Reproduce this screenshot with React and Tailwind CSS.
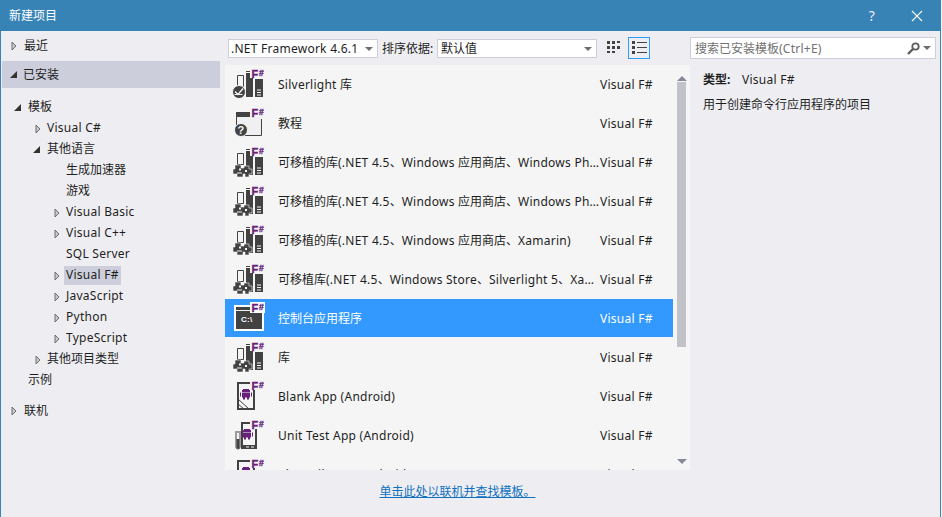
import React from "react";

const FONT = '"Noto Sans","Noto Sans CJK SC",sans-serif';

function T({ children }) {
  const parts = String(children).split(/([\u3000-\u9fff\uff00-\uffef]+)/);
  return (
    <>
      {parts.map((p, i) =>
        i % 2 === 1 ? (
          <span key={i} className="tracking-normal">{p}</span>
        ) : (
          <React.Fragment key={i}>{p}</React.Fragment>
        )
      )}
    </>
  );
}

function FSharp({ x = 19.5, y = 9.5 }) {
  return (
    <text x={x} y={y} fontFamily='"Liberation Sans",sans-serif' fontWeight="700" fill="#68217A" stroke="#68217A" strokeWidth="0.35">
      <tspan fontSize="11">F</tspan>
      <tspan fontSize="8.5" dx="0.5" dy="-1.5">#</tspan>
    </text>
  );
}

function Books() {
  return (
    <>
      <path d="M5.5 7.5h6v11h-6z" fill="#F5F5F5" stroke="#424242" />
      <path d="M14 5h7v24h-7z" fill="#424242" />
      <path d="M14 3.5h4" stroke="#424242" />
      <path d="M23 11h8v18h-8z" fill="#424242" />
      <path d="M25 22h4M25 24.5h4M25 27h4" stroke="#F5F5F5" />
      <rect x="18" y="0" width="15" height="10" fill="#F5F5F5" />
    </>
  );
}

function SilverlightIcon() {
  return (
    <svg width="34" height="33" viewBox="0 0 34 33" className="shrink-0">
      <Books />
      <circle cx="7" cy="24" r="6.5" fill="#424242" stroke="#F5F5F5" />
      <path d="M3 23.5l3 3 5-6" fill="none" stroke="#F5F5F5" strokeWidth="1.4" />
      <path d="M2.5 26.5h8" stroke="#F5F5F5" />
      <FSharp />
    </svg>
  );
}

function PortableIcon() {
  return (
    <svg width="34" height="33" viewBox="0 0 34 33" className="shrink-0">
      <Books />
      <path d="M3 19h6v3h3v-2h5v3h3v5h-3v3h-4v-3h-2v3H5v-3H1v-5h2z" fill="#424242" stroke="#F5F5F5" strokeWidth="0.6" />
      <path d="M7 22.5h2v2H7zM13 24h2v2h-2z" fill="#F5F5F5" />
      <path d="M5 27h5" stroke="#F5F5F5" />
      <FSharp />
    </svg>
  );
}

function TutorialIcon() {
  return (
    <svg width="34" height="33" viewBox="0 0 34 33" className="shrink-0">
      <path d="M4 5h26v23H4z" fill="#F0EFF1" />
      <path d="M4 5h15v5H4z" fill="#424242" />
      <path d="M4.5 10v8M29.5 12v16.5H12" fill="none" stroke="#424242" />
      <circle cx="9" cy="23" r="6.5" fill="#424242" stroke="#F5F5F5" />
      <text x="9" y="27" textAnchor="middle" fontSize="11" fontWeight="700" fontFamily='"Liberation Sans",sans-serif' fill="#F5F5F5">?</text>
      <rect x="18" y="0" width="15" height="10" fill="#F5F5F5" />
      <FSharp />
    </svg>
  );
}

function ConsoleIcon() {
  return (
    <svg width="34" height="33" viewBox="0 0 34 33" className="shrink-0">
      <rect x="2" y="3" width="30" height="26" fill="#FFFFFF" />
      <rect x="4" y="5" width="26" height="22" fill="#424242" />
      <path d="M4 8.5h26" stroke="#F0EFF1" />
      <text x="9" y="19.5" fontSize="8" fontWeight="700" fontFamily='"Liberation Sans",sans-serif' fill="#FFFFFF">C:\</text>
      <rect x="18" y="0" width="15" height="11" fill="#FFFFFF" />
      <FSharp />
    </svg>
  );
}

function Droid() {
  return (
    <g fill="#68217A">
      <path d="M11 9h6v1h1v2h-8v-2h1z" />
      <path d="M10 12.5h8v5h-1v2h-2v-2h-2v2h-2v-2h-1z" />
      <path d="M8 12.5h1v4H8zM19 12.5h1v4h-1z" />
    </g>
  );
}

function AndroidIcon() {
  return (
    <svg width="34" height="33" viewBox="0 0 34 33" className="shrink-0">
      <path d="M5 2h18v28H5z" fill="#424242" />
      <path d="M7 4h14v24H7z" fill="#F5F5F5" />
      <path d="M6 19l11 10M6 24l6 5" stroke="#424242" />
      <rect x="18" y="0" width="15" height="10" fill="#F5F5F5" />
      <Droid />
      <FSharp />
    </svg>
  );
}

function UnitTestIcon() {
  return (
    <svg width="34" height="33" viewBox="0 0 34 33" className="shrink-0">
      <path d="M9 3h16v27H9z" fill="#424242" />
      <path d="M11 5h12v21H11z" fill="#F5F5F5" />
      <path d="M14 28h3M19 28h3" stroke="#F5F5F5" />
      <path d="M3 13h6M4 14v14a2 2 0 0 0 4 0V14" fill="#F5F5F5" stroke="#424242" />
      <path d="M4.5 20h3v8a1.5 1.5 0 0 1-3 0z" fill="#424242" />
      <rect x="18" y="0" width="15" height="10" fill="#F5F5F5" />
      <g transform="translate(1,1)"><Droid /></g>
      <FSharp />
    </svg>
  );
}

const rows = [
  ["Silverlight 库", SilverlightIcon],
  ["教程", TutorialIcon],
  ["可移植的库(.NET 4.5、Windows 应用商店、Windows Phone 8.1)", PortableIcon],
  ["可移植的库(.NET 4.5、Windows 应用商店、Windows Phone Silverlight 8)", PortableIcon],
  ["可移植的库(.NET 4.5、Windows 应用商店、Xamarin)", PortableIcon],
  ["可移植库(.NET 4.5、Windows Store、Silverlight 5、Xamarin)", PortableIcon],
  ["控制台应用程序", ConsoleIcon, true],
  ["库", PortableIcon],
  ["Blank App (Android)", AndroidIcon],
  ["Unit Test App (Android)", UnitTestIcon],
  ["Class Library (Android)", AndroidIcon],
];

function Closed() {
  return (
    <svg width="6" height="10" viewBox="0 0 6 10" className="shrink-0">
      <path d="M1 1l4 4-4 4z" fill="#C8C8C8" stroke="#6E6E6E" />
    </svg>
  );
}
function Open() {
  return (
    <svg width="7" height="7" viewBox="0 0 7 7" className="shrink-0">
      <path d="M7 0v7H0z" fill="#333333" />
    </svg>
  );
}

const tree = [
  ["模板", 14, "open"],
  ["Visual C#", 35, "closed"],
  ["其他语言", 33, "open"],
  ["生成加速器", 66, null],
  ["游戏", 66, null],
  ["Visual Basic", 54, "closed"],
  ["Visual C++", 54, "closed"],
  ["SQL Server", 66, null],
  ["Visual F#", 54, "closed", true],
  ["JavaScript", 54, "closed"],
  ["Python", 54, "closed"],
  ["TypeScript", 54, "closed"],
  ["其他项目类型", 35, "closed"],
  ["示例", 28, null],
];

function TreeRow({ label, x, kind, active }) {
  const text = active ? "px-[2px] bg-[#CCCEDB]" : "px-[2px]";
  return (
    <div className="flex h-[21px] items-center" style={{ paddingLeft: kind ? x - 1 : x - 3 }}>
      {kind === "closed" && <span className="flex w-[10px]"><Closed /></span>}
      {kind === "open" && <span className="flex w-[12px]"><Open /></span>}
      <span className={`${text} h-[19px] leading-[18px]`}><T>{label}</T></span>
    </div>
  );
}

function Caret() {
  return <div className="h-0 w-0 border-x-[4px] border-t-[4px] border-x-transparent border-t-[#6D6D70]" />;
}

export default function App() {
  return (
    <div
      className="h-[517px] w-[942px] overflow-hidden bg-[#F5F5F5] text-[12px] tracking-[0.25px] text-[#1E1E1E]"
      style={{ fontFamily: FONT }}
    >
      <div className="flex h-[517px] w-[941px] flex-col border-x border-[#3883B5] bg-[#EEEEF2]">
        <header className="flex h-[31px] shrink-0 items-center justify-between bg-[#3883B5] pl-[8px] text-white">
          <T>新建项目</T>
          <div className="flex items-center">
            <span className="text-[14px] text-[#E8EEF5]">?</span>
            <svg width="12" height="12" viewBox="0 0 12 12" className="ml-[36px] mr-[17px]">
              <path d="M1 1l10 10M11 1L1 11" stroke="#F0F5FA" strokeWidth="1.2" />
            </svg>
          </div>
        </header>
        <div className="flex h-[483px] shrink-0">
          <aside className="w-[224px] shrink-0 pt-[1px]">
            <div className="flex h-[27px] items-center pl-[10px]">
              <span className="flex w-[13px]"><Closed /></span><T>最近</T>
            </div>
            <div className="ml-[1px] mr-[5px] mt-[2px] flex h-[27px] items-center bg-[#CCCEDB] pl-[8px]">
              <span className="flex w-[13px]"><Open /></span><T>已安装</T>
            </div>
            <div className="mt-[9px]">
              {tree.map(([label, x, kind, active]) => (
                <TreeRow key={label} label={label} x={x} kind={kind} active={active} />
              ))}
            </div>
            <div className="mt-[6px] flex h-[27px] items-center pl-[10px]">
              <span className="flex w-[13px]"><Closed /></span><T>联机</T>
            </div>
          </aside>

          <main className="flex w-[465px] shrink-0 flex-col">
            <div className="flex h-[34px] shrink-0 items-center pl-[3px]">
              <div className="mt-[1px] flex h-[19px] w-[150px] items-center justify-between border border-[#CCCEDB] bg-white pl-[2px] pr-[4px]">
                <span>.NET Framework 4.6.1</span>
                <Caret />
              </div>
              <span className="ml-[4px] mt-[1px] w-[55px]"><T>排序依据:</T></span>
              <div className="mt-[1px] flex h-[19px] w-[160px] items-center justify-between border border-[#CCCEDB] bg-white pl-[3px] pr-[4px]">
                <span><T>默认值</T></span>
                <Caret />
              </div>
              <svg width="14" height="14" viewBox="0 0 14 14" className="ml-[10px]">
                <path d="M0 0h3v3H0zM5 0h3v3H5zM10 0h3v2h-3zM0 5h3v3H0zM5 5h3v3H5zM10 5h3v3h-3zM0 10h3v2H0zM5 10h3v2H5z" fill="#424242" />
              </svg>
              <div className="ml-[7px] flex h-[22px] w-[22px] items-center justify-center border border-[#3399FF]">
                <svg width="15" height="14" viewBox="0 0 15 14">
                  <path d="M0 0h3v3H0zM0 5h3v3H0zM0 10h3v3H0z" fill="#424242" />
                  <path d="M5 1.5h10M5 6.5h10M5 11.5h10" stroke="#424242" />
                </svg>
              </div>
            </div>
            <div className="flex h-[405px] w-[465px] bg-[#F5F5F5]">
              <div className="h-[405px] w-[448px] overflow-hidden">
                {rows.map(([name, Icon, sel], i) => (
                  <div
                    key={i}
                    className={`flex h-[39px] items-center pl-[7px] ${sel ? "bg-[#3399FF] text-white shadow-[inset_0_-1px_0_#F5F5F5]" : ""}`}
                  >
                    <Icon />
                    <span className="ml-[12px] w-[322px] truncate"><T>{name}</T></span>
                    <span>Visual F#</span>
                  </div>
                ))}
              </div>
              <div className="flex w-[17px] flex-col items-center">
                <div className="mt-[11px] h-0 w-0 border-x-[5px] border-b-[5px] border-x-transparent border-b-[#868999]" />
                <div className="mt-[1px] h-[265px] w-[9px] bg-[#C2C3C9]" />
                <div className="mt-[112px] h-0 w-0 border-x-[5px] border-t-[5px] border-x-transparent border-t-[#868999]" />
              </div>
            </div>
            <div className="flex flex-1 items-center justify-center">
              <a className="text-[#0E70C0] underline"><T>单击此处以联机并查找模板。</T></a>
            </div>
          </main>

          <section className="min-w-0 flex-1">
            <div className="flex h-[34px] items-center">
              <div className="flex h-[22px] w-[246px] items-center justify-between border border-[#CCCEDB] bg-white pl-[4px] pr-[4px] text-[#717171]">
                <span className="pt-[1px]"><T>搜索已安装模板(Ctrl+E)</T></span>
                <div className="flex items-center gap-[3px]">
                  <svg width="13" height="13" viewBox="0 0 13 13">
                    <circle cx="8.5" cy="4.5" r="3.2" fill="none" stroke="#5E5E5E" strokeWidth="1.8" />
                    <path d="M6 7l-5 5" stroke="#5E5E5E" strokeWidth="2.4" />
                  </svg>
                  <Caret />
                </div>
              </div>
            </div>
            <div className="pl-[13px] pt-[6px]">
              <div className="flex h-[18px] items-center">
                <span className="w-[39px] font-bold"><T>类型:</T></span>
                <span>Visual F#</span>
              </div>
              <div className="mt-[7px] h-[18px] leading-[18px]"><T>用于创建命令行应用程序的项目</T></div>
            </div>
          </section>
        </div>
      </div>
    </div>
  );
}
